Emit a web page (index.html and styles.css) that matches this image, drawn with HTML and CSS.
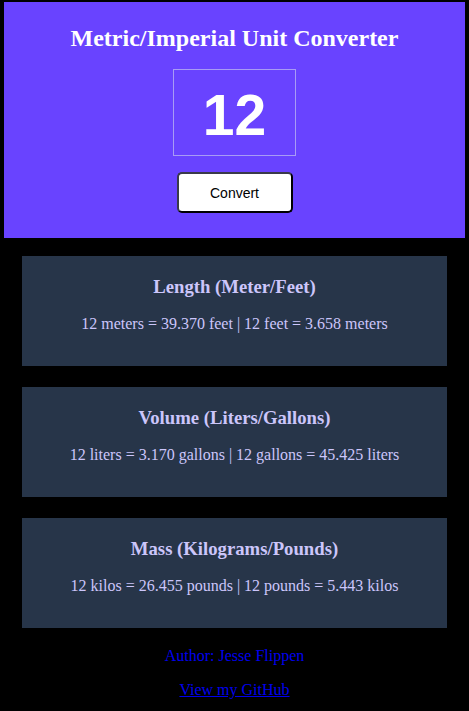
FILE: index.html
```html
<!DOCTYPE html>
<html>
<head>
<meta charset="utf-8">
<link rel="stylesheet" href="styles.css">
</head>
<body>
<header class="hero">
  <h1 class="title">Metric/Imperial Unit Converter</h1>
  <div class="input-box">12</div>
  <button class="convert-btn">Convert</button>
</header>
<main class="results">
  <section class="card">
    <h2 class="card-title">Length (Meter/Feet)</h2>
    <p class="card-text">12 meters = 39.370 feet | 12 feet = 3.658 meters</p>
  </section>
  <section class="card">
    <h2 class="card-title">Volume (Liters/Gallons)</h2>
    <p class="card-text">12 liters = 3.170 gallons | 12 gallons = 45.425 liters</p>
  </section>
  <section class="card">
    <h2 class="card-title">Mass (Kilograms/Pounds)</h2>
    <p class="card-text">12 kilos = 26.455 pounds | 12 pounds = 5.443 kilos</p>
  </section>
</main>
<footer class="footer">
  <p class="author">Author: Jesse Flippen</p>
  <a class="gh-link" href="#">View my GitHub</a>
</footer>
</body>
</html>
```
FILE: styles.css
```css
html, body {
  margin: 0;
  padding: 0;
  background: #000;
  font-family: "Liberation Serif", "Times New Roman", serif;
}
.hero {
  margin: 2px 4px 0;
  height: 236px;
  background: #6943ff;
  display: flex;
  flex-direction: column;
  align-items: center;
  box-sizing: border-box;
  padding-top: 22px;
}
.title {
  margin: 0;
  color: #fff;
  font-size: 24px;
  font-weight: bold;
  line-height: 28px;
}
.input-box {
  margin-top: 17px;
  width: 123px;
  height: 87px;
  box-sizing: border-box;
  border: 1px solid #a89bf5;
  color: #fff;
  font-family: "Liberation Sans", Arial, sans-serif;
  font-weight: bold;
  font-size: 57px;
  display: flex;
  align-items: center;
  justify-content: center;
  padding-top: 4px;
}
.convert-btn {
  margin-top: 16px;
  width: 116px;
  height: 41px;
  background: #fff;
  border: 2px solid #3a3a4a;
  border-right-color: #000;
  border-bottom-color: #000;
  border-radius: 5px;
  font-family: "Liberation Sans", Arial, sans-serif;
  font-size: 14px;
  color: #000;
}
.results {
  display: flex;
  flex-direction: column;
  gap: 21px;
  padding: 18px 22px 0;
}
.card {
  height: 110px;
  background: #273549;
  color: #ccc6fb;
  text-align: center;
  box-sizing: border-box;
  padding-top: 20px;
}
.card-title {
  margin: 0;
  font-size: 18.72px;
  line-height: 22px;
  font-weight: bold;
}
.card-text {
  margin: 16px 0 0;
  font-size: 16px;
  line-height: 20px;
}
.footer {
  text-align: center;
  padding-top: 18px;
  font-size: 16px;
  color: #0000ee;
}
.author {
  margin: 0;
  line-height: 20px;
}
.gh-link {
  display: inline-block;
  margin-top: 14px;
  color: #0000ee;
  line-height: 20px;
}
```
